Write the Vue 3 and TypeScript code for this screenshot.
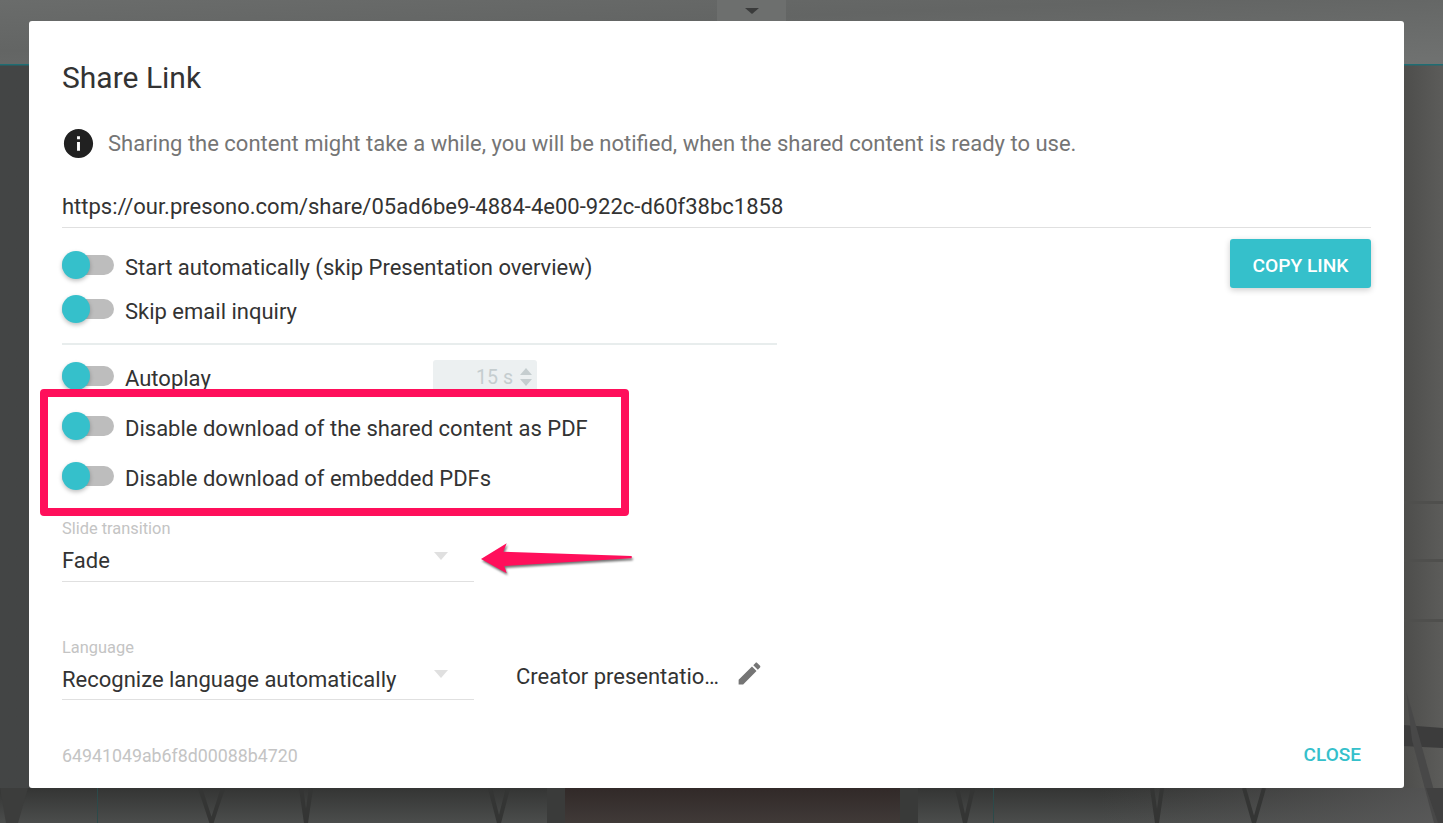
<script setup lang="ts">
	const topToggles = [
		"Start automatically (skip Presentation overview)",
		"Skip email inquiry",
	];
	const pdfToggles = [
		"Disable download of the shared content as PDF",
		"Disable download of embedded PDFs",
	];
	const shareUrl = "https://our.presono.com/share/05ad6be9-4884-4e00-922c-d60f38bc1858";
	// x position and width of the chair legs showing below the dialog
	const legs = [
		{ x: 198, w: 27 },
		{ x: 299, w: 14 },
		{ x: 488, w: 22 },
		{ x: 955, w: 20 },
		{ x: 1150, w: 14 },
		{ x: 1242, w: 24 },
	];
</script>

<template>
	<div class="page">
		<svg class="backdrop" width="1443" height="823" viewBox="0 0 1443 823">
			<defs>
				<linearGradient id="wall" x1="0" x2="1" y1="0" y2="0">
					<stop offset="0" stop-color="#434545" />
					<stop offset="0.5" stop-color="#444" />
					<stop offset="0.97" stop-color="#4c4c4a" />
					<stop offset="1" stop-color="#5c5c5a" />
				</linearGradient>
				<linearGradient id="bar" x1="0" x2="1" y1="0" y2="1">
					<stop offset="0" stop-color="#6a6c6b" />
					<stop offset="0.4" stop-color="#636564" />
					<stop offset="1" stop-color="#707271" />
				</linearGradient>
				<linearGradient id="floor" x1="0" x2="0" y1="0" y2="1">
					<stop offset="0" stop-color="#343534" />
					<stop offset="1" stop-color="#4b4d4c" />
				</linearGradient>
				<linearGradient id="floor-right" x1="0" x2="1" y1="0" y2="0">
					<stop offset="0" stop-color="#555" stop-opacity="0" />
					<stop offset="1" stop-color="#5c5c5c" stop-opacity="0.8" />
				</linearGradient>
				<linearGradient id="chair" x1="0" x2="0" y1="0" y2="1">
					<stop offset="0" stop-color="#312928" />
					<stop offset="1" stop-color="#403a38" />
				</linearGradient>
			</defs>
			<rect width="1443" height="823" fill="url(#wall)" />
			<rect y="788" width="1443" height="35" fill="url(#floor)" />
			<rect x="1100" y="788" width="343" height="35" fill="url(#floor-right)" />
			<rect width="1443" height="64" fill="url(#bar)" />
			<rect y="64" width="1443" height="1.5" fill="#1f6d73" />
			<rect x="717" width="69" height="22" fill="#6d6f6e" />
			<path d="M745 8h14l-7 6z" fill="#3a3b3b" />
			<g fill="#4f4f4d">
				<rect x="1403" y="501" width="40" height="3" />
				<rect x="1403" y="559" width="40" height="3" />
				<rect x="1403" y="619" width="40" height="3" />
			</g>
			<path d="M1403 725l40 3v20l-40-2z" fill="#3c3c3c" />
			<path d="M1406 690l14 50 23 83h-9l-22-83z" fill="#484848" />
			<rect x="565" y="788" width="335" height="35" fill="url(#chair)" />
			<rect x="547" y="788" width="18" height="35" fill="#3a3b3a" />
			<rect x="900" y="788" width="18" height="35" fill="#393a39" />
			<rect x="993" y="788" width="1" height="35" fill="#2c4a4a" />
			<rect x="97" y="788" width="1" height="35" fill="#2c4a4a" />
			<path v-for="leg in legs" :key="leg.x" fill="none" stroke="#343534" stroke-width="4" :d="`M${leg.x + 2} 788L${leg.x + leg.w / 2} 823L${leg.x + leg.w - 2} 788`" />
			<path d="M0 788h28l-10 35h-12z" fill="#3c3d3c" />
			<path d="M1426 788h17v35h-5z" fill="#404040" />
		</svg>

		<div class="overlay">
			<section class="dialog">
				<h2 class="title">Share Link</h2>

				<div class="info">
					<svg class="info-icon" viewBox="0 0 24 24" width="35" height="35">
						<path fill="#212121" d="M12 2C6.48 2 2 6.48 2 12s4.48 10 10 10 10-4.48 10-10S17.52 2 12 2zm1 15h-2v-6h2v6zm0-8h-2V7h2v2z" />
					</svg>
					<span>Sharing the content might take a while, you will be notified, when the shared content is ready to use.</span>
				</div>

				<div class="url-field">{{ shareUrl }}</div>

				<div class="options">
					<div class="options-left">
						<div v-for="label in topToggles" :key="label" class="toggle-row">
							<span class="toggle"><span class="knob"></span></span>
							<span class="toggle-label">{{ label }}</span>
						</div>

						<hr class="divider" />

						<div class="autoplay">
							<div class="toggle-row">
								<span class="toggle"><span class="knob"></span></span>
								<span class="toggle-label">Autoplay</span>
							</div>
							<div class="seconds">
								<span>15 s</span>
								<span class="spinner">
									<i class="up"></i>
									<i class="down"></i>
								</span>
							</div>
						</div>

						<div v-for="label in pdfToggles" :key="label" class="toggle-row tall">
							<span class="toggle"><span class="knob"></span></span>
							<span class="toggle-label">{{ label }}</span>
						</div>
					</div>
					<button class="copy-btn">COPY LINK</button>
				</div>

				<div class="select first">
					<label class="select-label">Slide transition</label>
					<div class="select-value">
						<span>Fade</span>
						<i class="caret"></i>
					</div>
				</div>

				<div class="language-row">
					<div class="select">
						<label class="select-label">Language</label>
						<div class="select-value">
							<span>Recognize language automatically</span>
							<i class="caret"></i>
						</div>
					</div>
					<div class="creator">
						<span>Creator presentatio…</span>
						<svg viewBox="0 0 24 24" width="29" height="29">
							<path fill="#757575" d="M3 17.25V21h3.75L17.81 9.94l-3.75-3.75L3 17.25zM20.71 7.04c.39-.39.39-1.02 0-1.41l-2.34-2.34c-.39-.39-1.02-.39-1.41 0l-1.83 1.83 3.75 3.75 1.83-1.83z" />
						</svg>
					</div>
				</div>

				<div class="footer">
					<span class="share-id">64941049ab6f8d00088b4720</span>
					<button class="close-btn">CLOSE</button>
				</div>
			</section>
		</div>

		<!-- annotations painted on top of the screenshot -->
		<div class="highlight"></div>
		<svg class="arrow" width="160" height="40" viewBox="0 0 160 40">
			<path fill="#ff0f5b" d="M1 16L26.700 .3 23.300 8.700 151.700 13 151.700 15.300 24.300 23 26.700 30.300z" />
		</svg>
	</div>
</template>

<style scoped>
	.page {
		position: relative;
		width: 1443px;
		height: 823px;
		overflow: hidden;
		font-family: Roboto, "Liberation Sans", sans-serif;
		color: #333;
	}

	.backdrop {
		position: absolute;
		inset: 0;
		display: block;
	}

	.overlay {
		position: absolute;
		inset: 0;
		padding: 21px 39px 35px 29px;
		box-sizing: border-box;
	}

	.dialog {
		height: 767px;
		box-sizing: border-box;
		padding: 36px 33px 18px;
		background: #fff;
		border-radius: 3px;
		font-size: 22px;
	}

	.title {
		margin: 0;
		height: 40px;
		line-height: 42px;
		font-size: 30px;
		font-weight: 400;
	}

	.info {
		display: flex;
		align-items: center;
		height: 40px;
		margin-top: 26px;
		color: #757575;
	}

	.info-icon {
		flex-shrink: 0;
		margin: 0 12px 0 -1px;
	}

	.url-field {
		height: 41px;
		line-height: 42px;
		margin-top: 23px;
		border-bottom: 1px solid #e0e0e0;
	}

	.options {
		display: flex;
		justify-content: space-between;
		align-items: flex-start;
	}

	.options-left {
		width: 715px;
		padding-top: 15px;
	}

	.toggle-row {
		display: flex;
		align-items: center;
		height: 44px;
	}

	.toggle-row.tall {
		height: 50px;
	}

	.toggle-label {
		padding-top: 4px;
	}

	.toggle {
		position: relative;
		flex-shrink: 0;
		display: block;
		width: 52px;
		height: 20px;
		margin-right: 11px;
		border-radius: 10px;
		background: #bdbdbd;
	}

	.knob {
		position: absolute;
		left: 0;
		top: -4px;
		width: 28px;
		height: 28px;
		border-radius: 50%;
		background: #35c0cb;
		box-shadow: 0 2px 4px rgba(0, 0, 0, 0.25);
	}

	.divider {
		margin: 12px 0 9px;
		height: 2px;
		border: 0;
		background: #e8eded;
	}

	.autoplay {
		display: flex;
		align-items: flex-start;
		justify-content: space-between;
		width: 475px;
		margin-bottom: 3px;
	}

	.seconds {
		display: flex;
		align-items: center;
		justify-content: flex-end;
		gap: 7px;
		box-sizing: border-box;
		width: 104px;
		height: 34px;
		margin-top: 6px;
		padding: 0 5px 0 0;
		border-radius: 3px;
		background: #ecf0f1;
		color: #c5cdcf;
		font-size: 19.6px;
	}

	.spinner {
		display: flex;
		flex-direction: column;
		gap: 4px;
	}

	.spinner i {
		display: block;
		width: 0;
		height: 0;
		border-left: 6.5px solid transparent;
		border-right: 6.5px solid transparent;
	}

	.spinner .up {
		border-bottom: 7px solid #c5cdcf;
	}

	.spinner .down {
		border-top: 7px solid #c5cdcf;
	}

	.copy-btn {
		width: 141px;
		height: 49px;
		margin-top: 11px;
		padding: 4px 0 0;
		border: 0;
		border-radius: 3px;
		background: #35c0cb;
		color: #fff;
		font: 500 19.2px Roboto, "Liberation Sans", sans-serif;
		box-shadow: 0 2px 6px rgba(0, 0, 0, 0.2);
	}

	.select {
		width: 412px;
	}

	.select.first {
		margin-top: 17px;
	}

	.select-label {
		display: block;
		height: 20px;
		line-height: 22px;
		font-size: 16.4px;
		color: #c4c4c4;
	}

	.select-value {
		display: flex;
		align-items: center;
		justify-content: space-between;
		box-sizing: border-box;
		height: 44px;
		padding: 2px 26px 0 0;
		border-bottom: 1px solid #e0e0e0;
	}

	.language-row .select-value {
		height: 43px;
	}

	.caret {
		display: block;
		width: 0;
		height: 0;
		margin-top: -10px;
		border-left: 7px solid transparent;
		border-right: 7px solid transparent;
		border-top: 8px solid #e0e0e0;
	}

	.language-row {
		display: flex;
		margin-top: 55px;
	}

	.creator {
		display: flex;
		align-items: center;
		gap: 16px;
		height: 32px;
		margin: 23px 0 0 42px;
	}

	.creator svg {
		margin-top: -5px;
	}

	.footer {
		display: flex;
		align-items: center;
		justify-content: space-between;
		height: 30px;
		margin-top: 40px;
	}

	.share-id {
		font-size: 17.8px;
		color: #c4c4c4;
	}

	.close-btn {
		margin: -2px 10px 0 0;
		padding: 0;
		border: 0;
		background: none;
		color: #35c0cb;
		font: 500 19px Roboto, "Liberation Sans", sans-serif;
	}

	.highlight {
		position: absolute;
		left: 40px;
		top: 389px;
		width: 589px;
		height: 127px;
		box-sizing: border-box;
		border: 8px solid #ff0f5b;
		border-radius: 4px;
	}

	.arrow {
		position: absolute;
		left: 480px;
		top: 543px;
		overflow: visible;
		filter: drop-shadow(1px 2px 1px rgba(0, 0, 0, 0.55));
	}
</style>
